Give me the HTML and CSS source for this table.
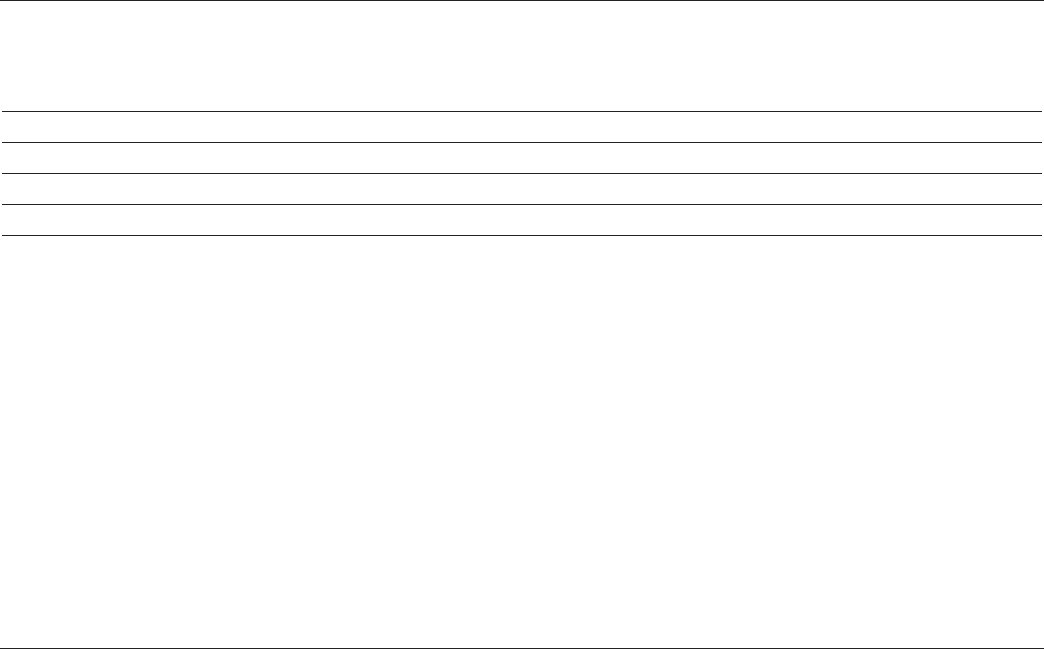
FILE: index.html
```html
<!DOCTYPE html>
<html lang="en">
<head>
<meta charset="utf-8">
<title>Table</title>
<link rel="stylesheet" href="styles.css">
</head>
<body>
<div class="frame">
  <div class="header"></div>
  <div class="rows">
    <div class="row"></div>
    <div class="row"></div>
    <div class="row"></div>
    <div class="row"></div>
  </div>
</div>
</body>
</html>
```
FILE: styles.css
```css
html, body {
  margin: 0;
  padding: 0;
  background: #fff;
  font-family: "Liberation Sans", Arial, sans-serif;
}
.frame {
  box-sizing: border-box;
  height: 649px;
  border-top: 1px solid #222;
  border-bottom: 1px solid #222;
  padding: 0 2px;
  display: flex;
  flex-direction: column;
}
.header {
  height: 110px;
  flex: none;
}
.rows {
  border-bottom: 1px solid #222;
}
.row {
  height: 30px;
  border-top: 1px solid #222;
}
```
